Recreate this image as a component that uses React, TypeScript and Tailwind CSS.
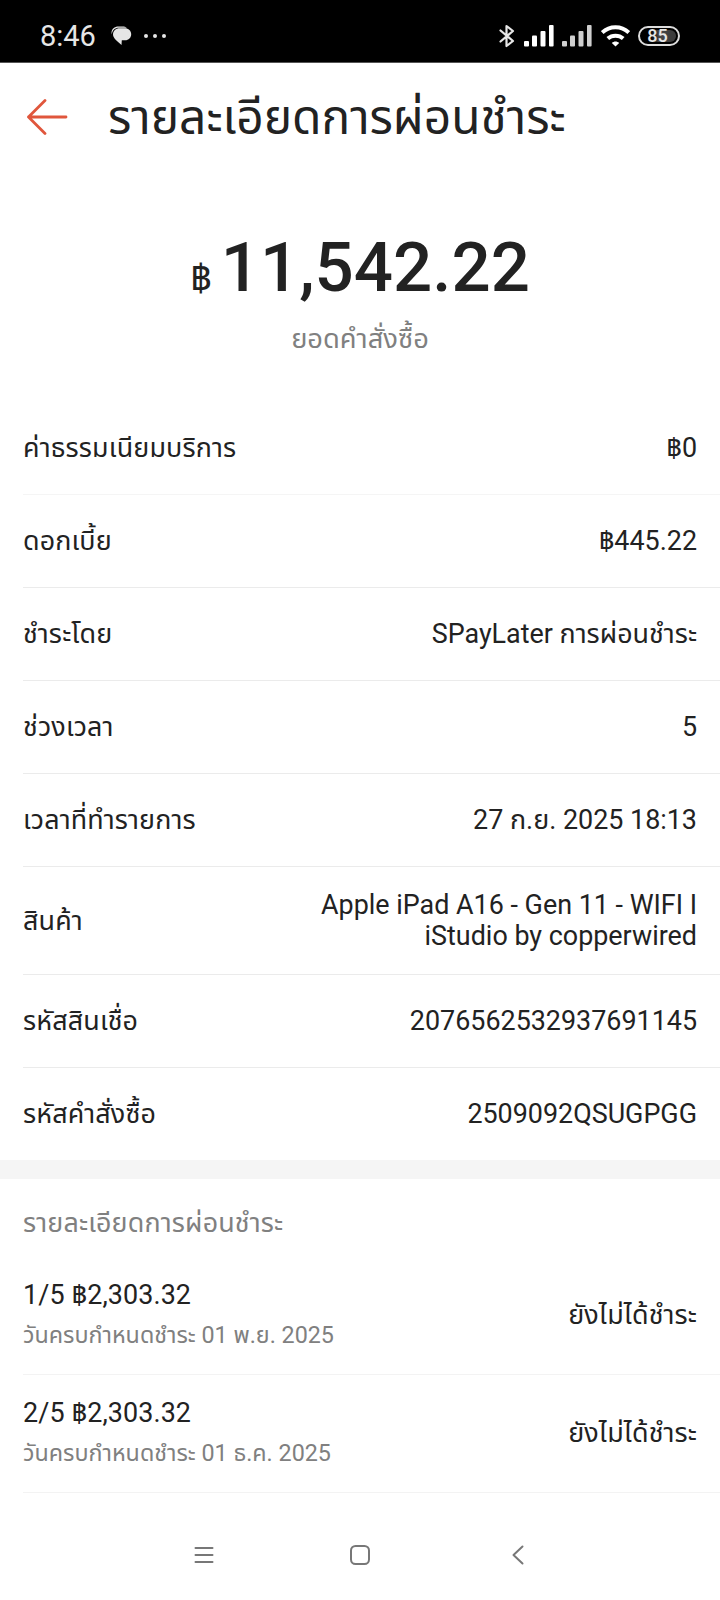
interface DetailRow {
  label: string;
  value: string[];
}

interface Installment {
  index: number;
  amount: string;
  dueDate: string;
  status: string;
}

const details: DetailRow[] = [
  { label: "ค่าธรรมเนียมบริการ", value: ["฿0"] },
  { label: "ดอกเบี้ย", value: ["฿445.22"] },
  { label: "ชำระโดย", value: ["SPayLater การผ่อนชำระ"] },
  { label: "ช่วงเวลา", value: ["5"] },
  { label: "เวลาที่ทำรายการ", value: ["27 ก.ย. 2025 18:13"] },
  {
    label: "สินค้า",
    value: ["Apple iPad A16 - Gen 11 - WIFI I", "iStudio by copperwired"],
  },
  { label: "รหัสสินเชื่อ", value: ["2076562532937691145"] },
  { label: "รหัสคำสั่งซื้อ", value: ["2509092QSUGPGG"] },
];

const installments: Installment[] = [
  { index: 1, amount: "฿2,303.32", dueDate: "01 พ.ย. 2025", status: "ยังไม่ได้ชำระ" },
  { index: 2, amount: "฿2,303.32", dueDate: "01 ธ.ค. 2025", status: "ยังไม่ได้ชำระ" },
];

const SignalBars = ({ className }: { className: string }) => (
  <svg className={className} width="30" height="22" viewBox="0 0 30 22" fill="currentColor">
    <rect x="0" y="16" width="5" height="5.5" rx="1" />
    <rect x="8" y="10.5" width="5" height="11" rx="1" />
    <rect x="16.5" y="6" width="5" height="15.5" rx="1" />
    <rect x="25" y="0" width="4.6" height="21.5" rx="1" />
  </svg>
);

const StatusBar = () => (
  <div className="h-[62px] shrink-0 bg-black flex items-center pt-[10px] pl-10 pr-[40px] text-[#e6e6e6]">
    <span className="text-[29px] leading-none w-[71px] pt-px">8:46</span>
    {/* Message bubble */}
    <svg width="21" height="20" viewBox="0 0 21 20" fill="currentColor">
      <path d="M.8 8.500C-.4 4 2.700.5 7.500.5h4c1.800 0 3.300.3 4.300 1.200H8C4 1.700 1.200 4.300.8 8.500Z" />
      <path d="M8.700 2.300h5c3.900 0 6.500 2.600 6.500 6s-2.600 6-6 6H10.800l-.3 4.800C7 16 2 12.500 2 8.600c0-3.700 2.800-6.300 6.700-6.300Z" />
    </svg>
    <div className="flex gap-[5px] ml-[12px] -mt-px">
      <span className="size-1 rounded-full bg-current" />
      <span className="size-1 rounded-full bg-current" />
      <span className="size-1 rounded-full bg-current" />
    </div>
    <div className="ml-auto flex items-center -mt-px">
      <svg width="16" height="24" viewBox="0 0 16 24" fill="none" stroke="currentColor" strokeWidth="2.200" strokeLinejoin="round" strokeLinecap="round">
        <path d="M1.500 6.500 14 17l-6.500 5V2L14 7 1.500 17.500" />
      </svg>
      <SignalBars className="ml-[9px] text-white" />
      <SignalBars className="ml-2 text-[#cfcfcf]" />
      <svg className="ml-[9px]" width="29" height="22" viewBox="0 0 29 22" fill="none" stroke="white" strokeWidth="4">
        <path d="M1.200 7.500c7.400-7 19.200-7 26.600 0" />
        <path d="M6.800 13.500c4.300-3.800 11.100-3.800 15.400 0" />
        <path d="M14.500 21.500 10.800 18c2.200-2 5.200-2 7.400 0Z" fill="white" stroke="none" />
      </svg>
      <div className="ml-2 w-[42px] h-[20px] rounded-full border-2 border-[#dcdcdc] p-[2px]">
        <div className="h-full rounded-full bg-gradient-to-r from-black from-15% via-[#484848] to-[#3c3c3c] to-85% flex items-center justify-center pr-[3px] text-[18px] font-medium leading-none">
          85
        </div>
      </div>
    </div>
  </div>
);

const Header = () => (
  <header className="h-[108px] shrink-0 flex items-center pl-[27px] border-t border-[#555]">
    <svg width="42" height="36" viewBox="0 0 42 36" fill="none" stroke="#e0563c" strokeWidth="2.800" strokeLinecap="round" strokeLinejoin="round">
      <path d="M18 1.500 1.500 18 18 34.500M1.500 18h37.500" />
    </svg>
    <h1 className="ml-[39px] pt-[5px] text-[47.8px] leading-none whitespace-nowrap">รายละเอียดการผ่อนชำระ</h1>
  </header>
);

const DetailItem = ({ label, value }: DetailRow) => (
  <div className="ml-[23px] pr-[23px] min-h-[93px] py-[22.5px] flex items-center justify-between border-b border-[#ebebeb] first:border-[#f5f5f5] last:border-b-0 last:min-h-[92px]">
    <span className="tracking-[0.15px]">{label}</span>
    <span className="text-right leading-[31px]">
      {value.map((line) => (
        <span key={line} className="block">
          {line}
        </span>
      ))}
    </span>
  </div>
);

const InstallmentItem = ({ index, amount, dueDate, status }: Installment) => (
  <div className="ml-[23px] pr-[23px] h-[118px] pb-px flex items-center justify-between border-b border-[#f3f3f3]">
    <div>
      <p className="leading-9 tracking-[0.1px]">
        {index}/5 {amount}
      </p>
      <p className="mt-1 text-[23.3px] leading-9 text-[#808080]">วันครบกำหนดชำระ {dueDate}</p>
    </div>
    <span className="tracking-[0.15px]">{status}</span>
  </div>
);

const NavBar = () => (
  <nav className="mt-auto h-[90px] shrink-0 flex items-center justify-between px-[194px] text-[#777]">
    <svg width="20" height="20" viewBox="0 0 20 20" fill="none" stroke="currentColor" strokeWidth="2" strokeLinecap="round">
      <path d="M1.500 3h17M1.500 10h17M1.500 17h17" />
    </svg>
    <svg width="20" height="20" viewBox="0 0 20 20" fill="none" stroke="currentColor" strokeWidth="2">
      <rect x="1" y="1" width="18" height="18" rx="4.500" />
    </svg>
    <svg width="20" height="20" viewBox="0 0 20 20" fill="none" stroke="currentColor" strokeWidth="2" strokeLinecap="round" strokeLinejoin="round">
      <path d="M16.500 1.500 7.500 10l9 8.500" />
    </svg>
  </nav>
);

export default function App() {
  return (
    <div className="w-[720px] h-[1600px] overflow-hidden flex flex-col bg-white text-[#222] text-[26.9px] leading-9 font-[Roboto,'Noto_Sans_Thai',sans-serif]">
      <StatusBar />
      <Header />

      <section className="h-[232px] shrink-0 flex flex-col items-center pt-[54px]">
        <div className="flex items-baseline leading-[88px]">
          <span className="text-[37px] mr-[9px]">฿</span>
          <span className="text-[69px] font-medium">11,542.22</span>
        </div>
        <p className="-mt-[2px] text-[27.3px] text-[#808080]">ยอดคำสั่งซื้อ</p>
      </section>

      <section>
        {details.map((row) => (
          <DetailItem key={row.label} {...row} />
        ))}
      </section>

      <div className="h-[19px] shrink-0 bg-[#f5f5f5]" />

      <section>
        <h2 className="h-[78px] pl-[23px] pt-[26px] text-[#808080] tracking-[0.15px]">รายละเอียดการผ่อนชำระ</h2>
        {installments.map((item) => (
          <InstallmentItem key={item.index} {...item} />
        ))}
      </section>

      <NavBar />
    </div>
  );
}
